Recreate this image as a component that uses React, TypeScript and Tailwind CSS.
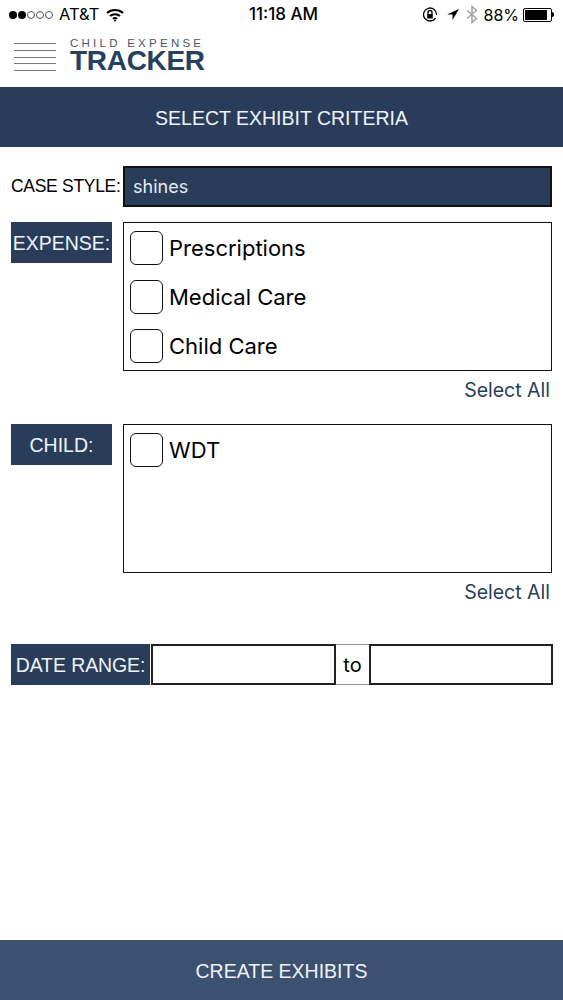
import React from 'react';

const sans = "font-['Liberation_Sans',Arial,sans-serif]";
const sf = "font-['Inter','Liberation_Sans',sans-serif]";

function CheckRow({ label }: { label: string }) {
  return (
    <div className="flex h-[49px] items-center pl-[6px]">
      <div className="h-[34px] w-[33px] rounded-[6px] border-[1.500px] border-[#111] bg-white" />
      <span className={`ml-[6px] text-[22px] leading-none text-black ${sf}`}>{label}</span>
    </div>
  );
}

function Label({ text }: { text: string }) {
  return (
    <div className={`flex h-[41px] w-[101px] items-center justify-center bg-[#293d5a] pt-[2px] text-[19.500px] text-[#eef3f8] ${sans}`}>
      {text}
    </div>
  );
}

function StatusBar() {
  return (
    <div className={`flex h-[29px] items-center justify-between pr-[9px] pl-[9px] text-black ${sf}`}>
      <div className="flex w-[204px] items-center">
        <div className="flex items-center gap-[1px]">
          <span className="h-[8px] w-[8px] rounded-full bg-black" />
          <span className="h-[8px] w-[8px] rounded-full bg-black" />
          <span className="h-[8px] w-[8px] rounded-full border border-[#555]" />
          <span className="h-[8px] w-[8px] rounded-full border border-[#555]" />
          <span className="h-[8px] w-[8px] rounded-full border border-[#555]" />
        </div>
        <span className="ml-[6px] text-[16.500px]">AT&amp;T</span>
        <svg className="ml-[7px]" width="18" height="14" viewBox="0 0 18 14" fill="none" stroke="black" strokeWidth="2">
          <path d="M1 5c4.500-4 11.500-4 16 0" />
          <path d="M4 8c2.800-2.500 7.200-2.500 10 0" />
          <path d="M6.800 10.800c1.300-1 3.100-1 4.400 0" />
          <circle cx="9" cy="12.500" r="1" fill="black" stroke="none" />
        </svg>
      </div>
      <span className="text-[17px] font-medium">11:18 AM</span>
      <div className="flex w-[200px] items-center justify-end">
        <svg width="16" height="16" viewBox="0 0 16 16" fill="none" stroke="black" strokeWidth="1.300">
          <path d="M13.500 11A6.500 6.500 0 1 1 14.500 8" />
          <rect x="5.200" y="7" width="5.600" height="4.500" fill="black" stroke="none" />
          <path d="M6 7V5.500a2 2 0 0 1 4 0V7" />
        </svg>
        <svg className="ml-[9px]" width="12" height="12" viewBox="0 0 12 12">
          <path d="M12 0 0 5.500h5.500V11Z" fill="black" />
        </svg>
        <svg className="ml-[7px]" width="12" height="19" viewBox="0 0 12 19" fill="none" stroke="#a3a3a3" strokeWidth="1.500">
          <path d="M1 5.500 10.500 13.500 6 17.500V1.500L10.500 5.500 1 13.500" />
        </svg>
        <span className="ml-[5px] text-[16px]">88%</span>
        <div className="ml-[4px] flex items-center">
          <div className="h-[14px] w-[29px] rounded-[2px] border border-black p-[1px]">
            <div className="h-full w-[88%] bg-black" />
          </div>
          <div className="h-[5px] w-[2px] rounded-r-full bg-black" />
        </div>
      </div>
    </div>
  );
}

function Header() {
  return (
    <div className="flex h-[58px] items-start pl-[14px]">
      <div className="mt-[14px] flex w-[42px] flex-col gap-[5.800px]">
        <div className="h-px bg-[#77778a]" />
        <div className="h-px bg-[#77778a]" />
        <div className="h-px bg-[#77778a]" />
        <div className="h-px bg-[#77778a]" />
        <div className="h-px bg-[#77778a]" />
      </div>
      <div className={`mt-[8px] ml-[14px] ${sans}`}>
        <div className="h-[12px] text-[11.500px] leading-[12px] tracking-[3.250px] whitespace-nowrap text-[#4a5468]">CHILD EXPENSE</div>
        <div className="text-[28px] leading-[24px] font-bold tracking-[-0.300px] text-[#26405f]">TRACKER</div>
      </div>
    </div>
  );
}

export default function App() {
  return (
    <div className="flex h-[1000px] w-[563px] flex-col overflow-hidden bg-white">
      <StatusBar />
      <Header />
      <div className={`flex h-[60px] items-center justify-center bg-[#293d5a] pt-[3px] text-[19.500px] text-[#eef3f8] ${sans}`}>
        SELECT EXHIBIT CRITERIA
      </div>

      <div className="flex-1 pt-[19px] pr-[11px] pl-[11px]">
        <div className="flex h-[41px] items-center">
          <span className={`w-[112px] text-[17.500px] tracking-[-0.300px] whitespace-nowrap text-black ${sans}`}>CASE STYLE:</span>
          <div className={`flex h-full flex-1 items-center border-2 border-[#111] bg-[#293d5a] pl-[8px] text-[18px] text-[#e6ebf2] ${sf}`}>
            shines
          </div>
        </div>

        <div className="mt-[15px] flex items-start">
          <Label text="EXPENSE:" />
          <div className="ml-[11px] h-[149px] flex-1 border-[1.500px] border-[#111]">
            <CheckRow label="Prescriptions" />
            <CheckRow label="Medical Care" />
            <CheckRow label="Child Care" />
          </div>
        </div>
        <div className={`mt-[7px] h-[24px] pr-[2px] text-right text-[19.500px] leading-[24px] text-[#293d5a] ${sf}`}>Select All</div>

        <div className="mt-[22px] flex items-start">
          <Label text="CHILD:" />
          <div className="ml-[11px] h-[149px] flex-1 border-[1.500px] border-[#111]">
            <CheckRow label="WDT" />
          </div>
        </div>
        <div className={`mt-[7px] h-[24px] pr-[2px] text-right text-[19.500px] leading-[24px] text-[#293d5a] ${sf}`}>Select All</div>

        <div className="mt-[40px] flex h-[41px] items-stretch">
          <div className={`flex w-[139px] items-center justify-center bg-[#293d5a] pt-[2px] text-[19.500px] tracking-[-0.100px] whitespace-nowrap text-[#eef3f8] ${sans}`}>
            DATE RANGE:
          </div>
          <div className="ml-[1px] w-[185px] border-2 border-[#222]" />
          <div className={`flex w-[33px] items-center justify-center border-y border-[#8892a4] text-[20px] text-black ${sf}`}>to</div>
          <div className="-mr-px flex-1 border-2 border-[#222]" />
        </div>
      </div>

      <div className={`flex h-[60px] items-center justify-center bg-[#3c506f] pt-[3px] text-[19.500px] text-[#eef3f8] ${sans}`}>
        CREATE EXHIBITS
      </div>
    </div>
  );
}
